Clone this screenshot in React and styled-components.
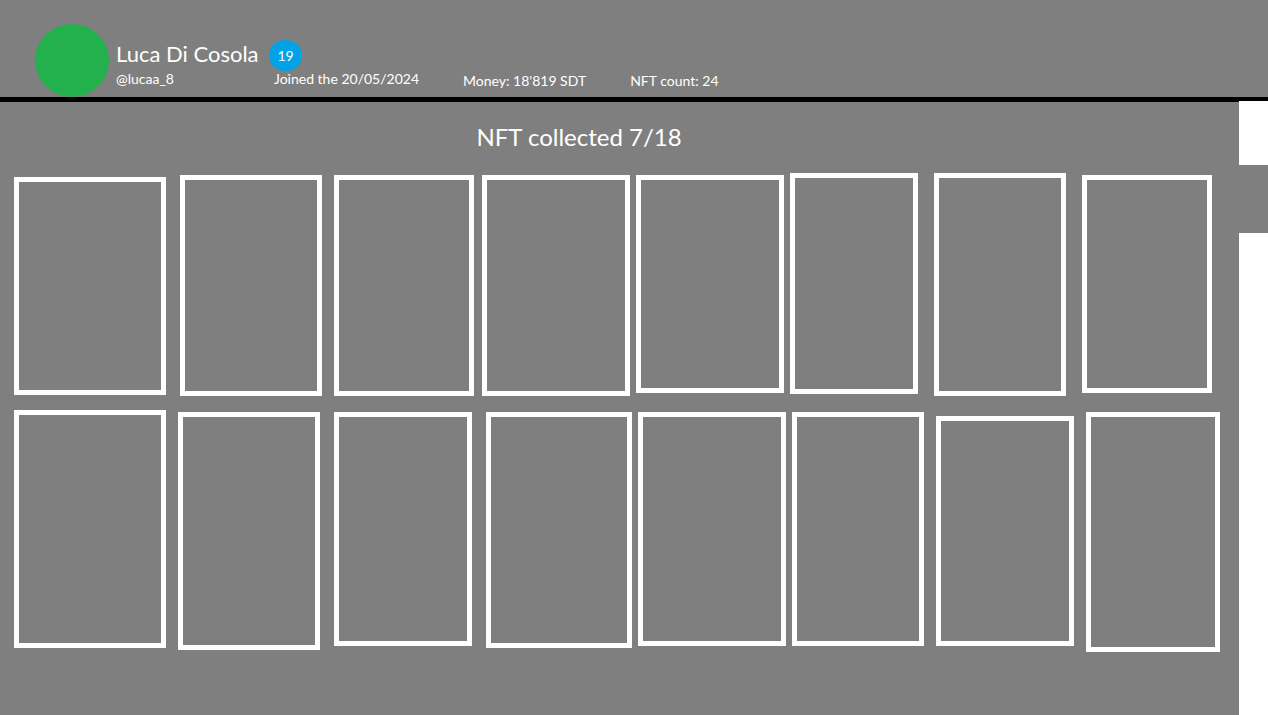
import React from "react";
import styled, { createGlobalStyle } from "styled-components";

const GlobalStyle = createGlobalStyle`
  *, *::before, *::after { box-sizing: border-box; }
  body {
    margin: 0;
    background: #7f7f7f;
    color: #fff;
    font-family: Lato, "Open Sans", sans-serif;
  }
`;

const Page = styled.div`
  display: flex;
  flex-direction: column;
  min-height: 100vh;
`;

const Header = styled.header`
  display: flex;
  align-items: flex-end;
  padding: 24px 32px 0 35px;
  border-bottom: 4px solid #000;
`;

const Avatar = styled.div`
  flex: none;
  width: 74px;
  height: 73px;
  border-radius: 50%;
  background: #22b14c;
`;

const Profile = styled.div`
  display: grid;
  grid-template-columns: 153px auto;
  grid-template-rows: 31px 16px;
  align-items: start;
  margin-left: 7px;
  padding-bottom: 10px;
`;

const Name = styled.h1`
  margin: 0;
  font-size: 22px;
  line-height: 28px;
  font-weight: 400;
  white-space: nowrap;
`;

const Level = styled.span`
  display: flex;
  align-items: center;
  justify-content: center;
  width: 33px;
  height: 31px;
  border-radius: 50%;
  background: #00a2e8;
  font-size: 14px;
`;

const Detail = styled.span`
  font-size: 14px;
  line-height: 16px;
  white-space: nowrap;
`;

const Joined = styled(Detail)`
  padding-left: 5px;
`;

const Stats = styled.div`
  display: flex;
  gap: 44px;
  margin-left: 44px;
  padding-bottom: 8px;
`;

const Body = styled.div`
  display: flex;
  flex: 1;
`;

const Gallery = styled.main`
  flex: 1;
  min-width: 0;
  padding: 18px 0 24px 14px;
  border-top: 1px solid #000;
`;

const Title = styled.h2`
  margin: 0 95px 19px 0;
  font-size: 24px;
  line-height: 34px;
  font-weight: 400;
  text-align: center;
`;

const Shelf = styled.div`
  display: flex;
  align-items: flex-start;
  padding-right: ${(p) => p.$end}px;

  & + & {
    margin-top: 14px;
  }
`;

const Slot = styled.div`
  flex: ${(p) => `${p.$width} 1 ${p.$width}px`};
  height: ${(p) => p.$height}px;
  margin-top: ${(p) => p.$drop}px;
  margin-right: ${(p) => p.$gap}px;
  border: 5px solid #fff;
`;

const ScrollTrack = styled.div`
  flex: none;
  width: 29px;
  padding-top: 64px;
  background: #fff;
`;

const ScrollThumb = styled.div`
  height: 68px;
  background: #7f7f7f;
`;

const shelves = [
  {
    end: 27,
    slots: [
      { width: 152, height: 218, drop: 4, gap: 14 },
      { width: 142, height: 221, drop: 2, gap: 12 },
      { width: 140, height: 221, drop: 2, gap: 8 },
      { width: 148, height: 221, drop: 2, gap: 6 },
      { width: 148, height: 218, drop: 2, gap: 6 },
      { width: 128, height: 221, drop: 0, gap: 16 },
      { width: 132, height: 223, drop: 0, gap: 16 },
      { width: 130, height: 218, drop: 2, gap: 0 },
    ],
  },
  {
    end: 19,
    slots: [
      { width: 152, height: 238, drop: 0, gap: 12 },
      { width: 142, height: 238, drop: 2, gap: 14 },
      { width: 138, height: 234, drop: 2, gap: 14 },
      { width: 146, height: 236, drop: 2, gap: 6 },
      { width: 148, height: 234, drop: 2, gap: 6 },
      { width: 132, height: 234, drop: 2, gap: 12 },
      { width: 138, height: 230, drop: 6, gap: 12 },
      { width: 134, height: 240, drop: 2, gap: 0 },
    ],
  },
];

export default function App() {
  return (
    <Page>
      <GlobalStyle />
      <Header>
        <Avatar />
        <Profile>
          <Name>Luca Di Cosola</Name>
          <Level>19</Level>
          <Detail>@lucaa_8</Detail>
          <Joined>Joined the 20/05/2024</Joined>
        </Profile>
        <Stats>
          <Detail>Money: 18'819 SDT</Detail>
          <Detail>NFT count: 24</Detail>
        </Stats>
      </Header>
      <Body>
        <Gallery>
          <Title>NFT collected 7/18</Title>
          {shelves.map((shelf, i) => (
            <Shelf key={i} $end={shelf.end}>
              {shelf.slots.map((slot, j) => (
                <Slot
                  key={j}
                  $width={slot.width}
                  $height={slot.height}
                  $drop={slot.drop}
                  $gap={slot.gap}
                />
              ))}
            </Shelf>
          ))}
        </Gallery>
        <ScrollTrack>
          <ScrollThumb />
        </ScrollTrack>
      </Body>
    </Page>
  );
}
